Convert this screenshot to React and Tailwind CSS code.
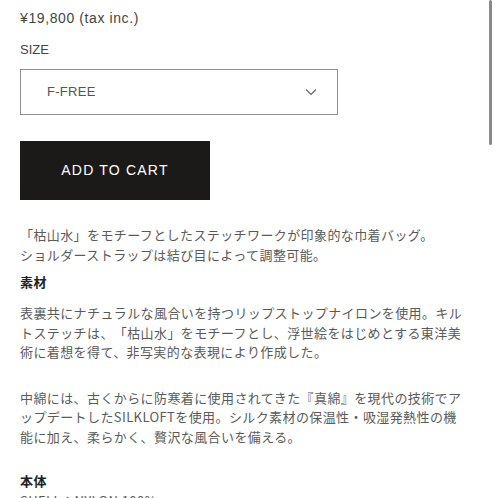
function App() {
  return (
    <div
      className="relative h-[498px] w-[498px] overflow-hidden bg-white"
      style={{ fontFamily: '"Liberation Sans", "Noto Sans CJK JP", sans-serif' }}
    >
      <div className="px-[20px]">
        <p className="mt-[8px] text-[14px] leading-[20px] tracking-[0.6px] text-[#444]">¥19,800 (tax inc.)</p>

        <p className="mt-[12px] text-[13px] leading-[20px] text-[#444]">SIZE</p>

        <div className="mt-[9px] flex h-[46px] w-[318px] items-center justify-between border border-[#8f8f8f] pl-[26px] pr-[20px]">
          <span className="text-[13px] tracking-[0.3px] text-[#555]">F-FREE</span>
          <svg width="12" height="8" viewBox="0 0 12 8" fill="none">
            <polyline points="1,1.5 6,6.5 11,1.5" stroke="#666" strokeWidth="1.2" />
          </svg>
        </div>

        <button className="mt-[26px] flex h-[59px] w-[190px] items-center justify-center bg-[#1b1a19] text-[14px] tracking-[1.2px] text-white">
          ADD TO CART
        </button>

        <div
          className="w-[444px] text-[13px] leading-[19.5px] tracking-[0.4px] text-[#5a5a5a] [text-spacing-trim:space-all]"
          style={{ fontFamily: '"Noto Sans CJK JP", sans-serif' }}
        >
          <p className="mt-[25px]">
            「枯山水」をモチーフとしたステッチワークが印象的な巾着バッグ。
            <br />
            ショルダーストラップは結び目によって調整可能。
          </p>

          <h3 className="mt-[8px] text-[13px] font-bold leading-[20px] text-[#222]">素材</h3>

          <p className="mt-[11px]">
            表裏共にナチュラルな風合いを持つリップストップナイロンを使用。キルトステッチは、「枯山水」をモチーフとし、浮世絵をはじめとする東洋美術に着想を得て、非写実的な表現により作成した。
          </p>

          <p className="mt-[26px]">
            中綿には、古くからに防寒着に使用されてきた『真綿』を現代の技術でアップデートしたSILKLOFTを使用。シルク素材の保温性・吸湿発熱性の機能に加え、柔らかく、贅沢な風合いを備える。
          </p>

          <h3 className="mt-[25px] text-[13px] font-bold leading-[20px] text-[#222]">本体</h3>
          <p>SHELL：NYLON 100%</p>
        </div>
      </div>

      <div className="absolute right-[6px] top-0 h-[145px] w-[3px] rounded-full bg-[#8a8a8a]" />
    </div>
  );
}

export default App;
